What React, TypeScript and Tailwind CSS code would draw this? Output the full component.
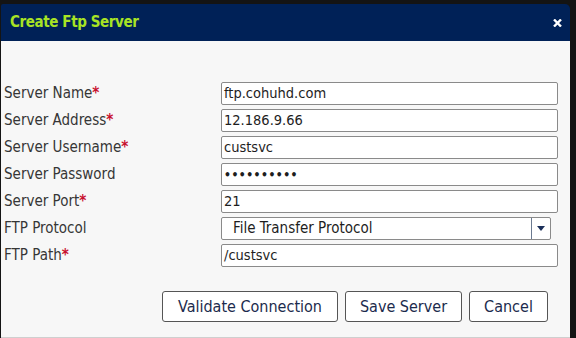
import React from "react";

const FONT = '"DejaVu Sans Condensed", "DejaVu Sans", sans-serif';

function Label({ text, req }: { text: string; req?: boolean }) {
  return (
    <div className="text-[15px] text-[#363636] leading-none whitespace-nowrap">
      {text}
      {req && <span className="text-[#c8102e] font-bold">*</span>}
    </div>
  );
}

function Field({ value, password }: { value: string; password?: boolean }) {
  return (
    <div className="h-[23px] w-[337px] bg-white border border-[#8a8a8a] rounded-[2px] flex items-center pl-[2px] text-[14.5px] text-[#1e1e1e] leading-none">
      {password ? <span className="tracking-[0.5px] text-[12px] font-bold">{value}</span> : value}
    </div>
  );
}

export default function App() {
  const rows: { label: string; req?: boolean; el: React.ReactNode }[] = [
    { label: "Server Name", req: true, el: <Field value="ftp.cohuhd.com" /> },
    { label: "Server Address", req: true, el: <Field value="12.186.9.66" /> },
    { label: "Server Username", req: true, el: <Field value="custsvc" /> },
    { label: "Server Password", el: <Field value="••••••••••" password /> },
    { label: "Server Port", req: true, el: <Field value="21" /> },
    {
      label: "FTP Protocol",
      el: (
        <div className="h-[23px] w-[330px] bg-white border border-[#8a8a8a] rounded-[2px] flex items-stretch text-[15px] text-[#1e1e1e] leading-none">
          <div className="flex-1 flex items-center pl-[11px]">File Transfer Protocol</div>
          <div className="w-[19px] border-l border-[#6b7a90] flex items-center justify-center">
            <svg width="8" height="5" viewBox="0 0 8 5">
              <path d="M0 0 L8 0 L4 5 Z" fill="#1b2f5a" />
            </svg>
          </div>
        </div>
      ),
    },
    { label: "FTP Path", req: true, el: <Field value="/custsvc" /> },
  ];

  return (
    <div className="w-[576px] h-[338px] bg-[#141414] pt-[4px] pl-[1px] pr-[6px]" style={{ fontFamily: FONT }}>
      <div className="h-full flex flex-col rounded-tr-[5px] rounded-tl-[2px] overflow-hidden">
        <div className="h-[37px] bg-[#002157] flex items-center justify-between pl-[9px] pr-[8px]">
          <div className="text-[15px] font-bold text-[#a8e424] leading-none tracking-[-0.4px]">Create Ftp Server</div>
          <svg width="9" height="8" viewBox="0 0 9 8">
            <path d="M1 0.5 L8 7.5 M8 0.5 L1 7.5" stroke="#ffffff" strokeWidth="2.4" />
          </svg>
        </div>
        <div className="flex-1 bg-[#f7f7f7] border-b border-[#cfcfcf] pt-[41px] pl-[3px] pr-[12px] flex flex-col">
          <div className="flex flex-col gap-[4px]">
            {rows.map((r) => (
              <div key={r.label} className="flex items-center h-[23px]">
                <div className="w-[217px]">
                  <Label text={r.label} req={r.req} />
                </div>
                {r.el}
              </div>
            ))}
          </div>
          <div className="flex justify-end gap-[7px] mt-[24px] pr-[10px]">
            {["Validate Connection", "Save Server", "Cancel"].map((b, i) => (
              <button
                key={b}
                className={`h-[31px] bg-white border border-[#555] rounded-[3px] text-[16px] text-[#1c2b4d] leading-none ${
                  i === 0 ? "w-[176px]" : i === 1 ? "w-[117px]" : "w-[79px]"
                }`}
              >
                {b}
              </button>
            ))}
          </div>
        </div>
      </div>
    </div>
  );
}
